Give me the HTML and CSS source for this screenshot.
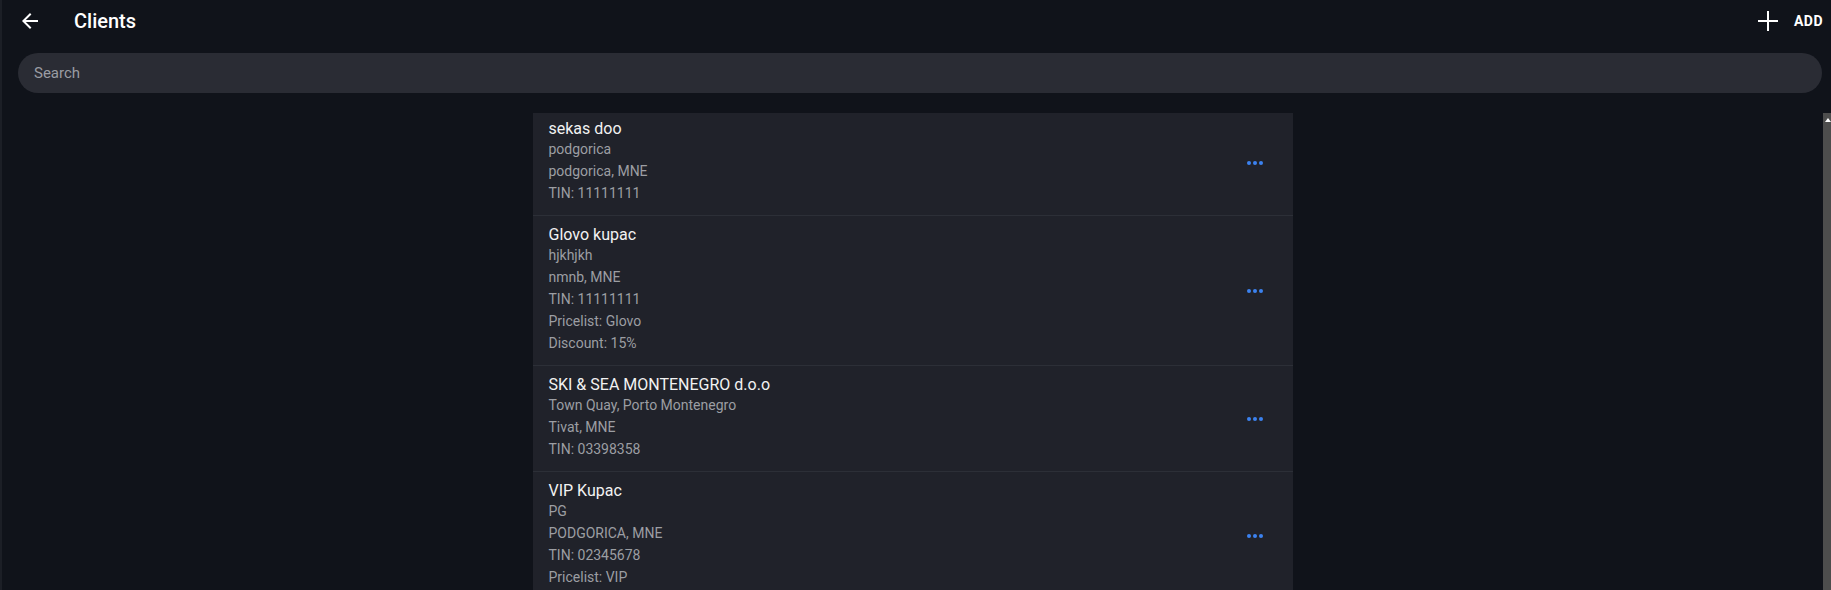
FILE: index.html
```html
<!DOCTYPE html>
<html lang="en">
<head>
    <meta charset="UTF-8">
    <title>Clients</title>
    <link rel="stylesheet" href="styles.css">
</head>
<body>
    <div class="page">
        <header class="topbar">
            <div class="back">
                <svg width="24" height="24" viewBox="0 0 24 24"><path d="M20 11H7.83l5.59-5.59L12 4l-8 8 8 8 1.41-1.41L7.83 13H20v-2z" fill="#fff"/></svg>
            </div>
            <h1 class="title">Clients</h1>
            <div class="add">
                <svg width="20" height="20" viewBox="0 0 20 20"><path d="M10 0v20M0 10h20" stroke="#fff" stroke-width="2"/></svg>
                <span>ADD</span>
            </div>
        </header>

        <div class="search">
            <input type="text" placeholder="Search">
        </div>

        <div class="content">
            <div class="main">
                <div class="list">
                    <div class="row">
                        <div class="info">
                            <div class="name">sekas doo</div>
                            <div class="line">podgorica</div>
                            <div class="line">podgorica, MNE</div>
                            <div class="line">TIN: 11111111</div>
                        </div>
                        <div class="more"><i></i><i></i><i></i></div>
                    </div>
                    <div class="row">
                        <div class="info">
                            <div class="name">Glovo kupac</div>
                            <div class="line">hjkhjkh</div>
                            <div class="line">nmnb, MNE</div>
                            <div class="line">TIN: 11111111</div>
                            <div class="line">Pricelist: Glovo</div>
                            <div class="line">Discount: 15%</div>
                        </div>
                        <div class="more"><i></i><i></i><i></i></div>
                    </div>
                    <div class="row">
                        <div class="info">
                            <div class="name">SKI &amp; SEA MONTENEGRO d.o.o</div>
                            <div class="line">Town Quay, Porto Montenegro</div>
                            <div class="line">Tivat, MNE</div>
                            <div class="line">TIN: 03398358</div>
                        </div>
                        <div class="more"><i></i><i></i><i></i></div>
                    </div>
                    <div class="row">
                        <div class="info">
                            <div class="name">VIP Kupac</div>
                            <div class="line">PG</div>
                            <div class="line">PODGORICA, MNE</div>
                            <div class="line">TIN: 02345678</div>
                            <div class="line">Pricelist: VIP</div>
                        </div>
                        <div class="more"><i></i><i></i><i></i></div>
                    </div>
                </div>
            </div>
            <div class="scrollbar"><span class="arrow"></span></div>
        </div>
    </div>
</body>
</html>
```

FILE: styles.css
```css
html, body{
    margin: 0;
    height: 100%;
}
body{
    background-color: #10131a;
    font-family: Roboto, "Liberation Sans", sans-serif;
    color: #f2f2f2;
    overflow: hidden;
}
.page{
    height: 590px;
    display: flex;
    flex-direction: column;
    border-left: 2px solid #1c1f26;
    box-sizing: border-box;
}

.topbar{
    height: 42px;
    display: flex;
    align-items: center;
    padding: 0 8px 0 16px;
}
.back{
    width: 24px;
    height: 24px;
}
.title{
    margin: 0 0 0 32px;
    font-size: 20px;
    font-weight: 500;
    color: #fff;
    flex: 1;
}
.add{
    display: flex;
    align-items: center;
    gap: 16px;
    font-size: 14px;
    font-weight: 700;
    letter-spacing: 0.5px;
    color: #fff;
}
.add svg{
    display: block;
}

.search{
    margin: 11px 9px 0 16px;
}
.search input{
    width: 100%;
    height: 40px;
    box-sizing: border-box;
    border: none;
    outline: none;
    border-radius: 20px;
    background: #2a2c34;
    padding: 0 16px;
    font-family: Roboto, "Liberation Sans", sans-serif;
    font-size: 15px;
    color: #e0e0e0;
}
.search input::placeholder{
    color: #9a9ca3;
}

.content{
    flex: 1;
    margin-top: 20px;
    display: flex;
    min-height: 0;
}
.main{
    flex: 1;
    overflow: hidden;
    display: flex;
    justify-content: center;
}
.list{
    width: 760px;
    margin-top: -3px;
    background: #20222a;
    align-self: flex-start;
}
.row{
    display: flex;
    align-items: center;
    border-bottom: 1px solid #2c2f37;
}
.info{
    flex: 1;
    padding: 10px 16px 11px;
}
.name{
    font-size: 16px;
    line-height: 18px;
    color: #f2f2f2;
}
.line{
    font-size: 14px;
    line-height: 22px;
    color: #9c9ea3;
}
.more{
    width: 40px;
    height: 40px;
    margin-right: 18px;
    display: flex;
    align-items: center;
    justify-content: center;
    gap: 2px;
}
.more i{
    width: 4px;
    height: 4px;
    border-radius: 50%;
    background: #3b82f0;
}

.scrollbar{
    width: 8px;
    background: #4d4d4d;
    position: relative;
}
.scrollbar .arrow{
    position: absolute;
    top: 5px;
    left: 2px;
    width: 0;
    height: 0;
    border-left: 3px solid transparent;
    border-right: 3px solid transparent;
    border-bottom: 4px solid #fff;
}
```
